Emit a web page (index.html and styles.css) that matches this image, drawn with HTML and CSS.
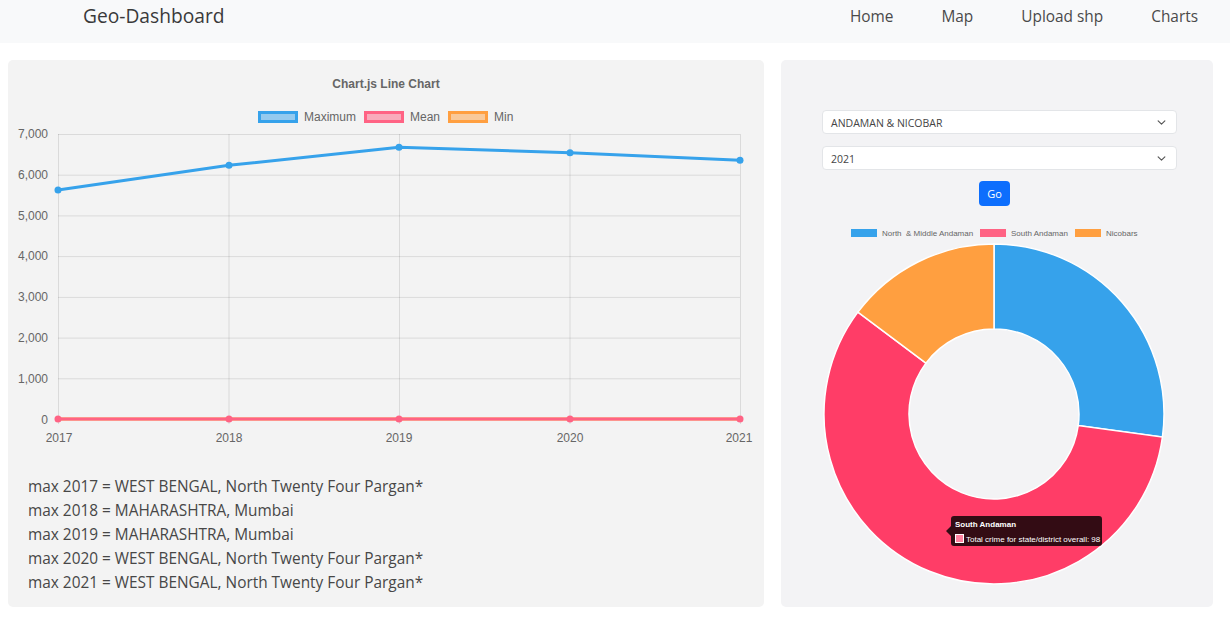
FILE: index.html
```html
<!DOCTYPE html>
<html lang="en">
<head>
<meta charset="utf-8">
<title>Geo-Dashboard</title>
<link rel="stylesheet" href="styles.css">
</head>
<body>
<nav class="navbar">
  <a class="brand" href="#">Geo-Dashboard</a>
  <ul class="nav-links">
    <li><a href="#">Home</a></li>
    <li><a href="#">Map</a></li>
    <li><a href="#">Upload shp</a></li>
    <li><a href="#">Charts</a></li>
  </ul>
</nav>

<main class="content">
  <section class="card card-line">
    <svg class="line-chart" width="756" height="400" viewBox="0 0 756 400">
      <text class="chart-title" x="378" y="28" text-anchor="middle">Chart.js Line Chart</text>
      <!-- legend -->
      <rect x="251.5" y="52.5" width="37" height="9" fill="rgba(54,162,235,0.5)" stroke="rgb(54,162,235)" stroke-width="3"/>
      <text class="lg" x="296" y="61">Maximum</text>
      <rect x="357.5" y="52.5" width="37" height="9" fill="rgba(255,99,132,0.5)" stroke="rgb(255,99,132)" stroke-width="3"/>
      <text class="lg" x="402" y="61">Mean</text>
      <rect x="441.5" y="52.5" width="37" height="9" fill="rgba(255,159,64,0.5)" stroke="rgb(255,159,64)" stroke-width="3"/>
      <text class="lg" x="486" y="61">Min</text>
      <!-- grid -->
      <g stroke="rgba(0,0,0,0.1)" stroke-width="1">
        <line x1="50" y1="74.5" x2="732" y2="74.5"/>
        <line x1="50" y1="115.2" x2="732" y2="115.2"/>
        <line x1="50" y1="155.9" x2="732" y2="155.9"/>
        <line x1="50" y1="196.6" x2="732" y2="196.6"/>
        <line x1="50" y1="237.4" x2="732" y2="237.4"/>
        <line x1="50" y1="278.1" x2="732" y2="278.1"/>
        <line x1="50" y1="318.8" x2="732" y2="318.8"/>
        <line x1="50" y1="359.5" x2="732" y2="359.5"/>
        <line x1="50.5" y1="74" x2="50.5" y2="364"/>
        <line x1="221" y1="74" x2="221" y2="364"/>
        <line x1="391.5" y1="74" x2="391.5" y2="364"/>
        <line x1="562" y1="74" x2="562" y2="364"/>
        <line x1="732.5" y1="74" x2="732.5" y2="364"/>
      </g>
      <g class="tick" text-anchor="end">
        <text x="40" y="78">7,000</text>
        <text x="40" y="119">6,000</text>
        <text x="40" y="160">5,000</text>
        <text x="40" y="200">4,000</text>
        <text x="40" y="241">3,000</text>
        <text x="40" y="282">2,000</text>
        <text x="40" y="323">1,000</text>
        <text x="40" y="364">0</text>
      </g>
      <g class="tick" text-anchor="middle">
        <text x="51" y="382">2017</text>
        <text x="221" y="382">2018</text>
        <text x="391" y="382">2019</text>
        <text x="562" y="382">2020</text>
        <text x="731" y="382">2021</text>
      </g>
      <!-- min line (hidden under mean) -->
      <polyline points="50,359 221,359 391,359 562,359 732,359" fill="none" stroke="rgb(255,159,64)" stroke-width="3"/>
      <!-- mean -->
      <polyline points="50,359 221,359 391,359 562,359 732,359" fill="none" stroke="rgb(255,99,132)" stroke-width="3"/>
      <g fill="rgb(255,99,132)">
        <circle cx="50" cy="359" r="3.5"/><circle cx="221" cy="359" r="3.5"/><circle cx="391" cy="359" r="3.5"/><circle cx="562" cy="359" r="3.5"/><circle cx="732" cy="359" r="3.5"/>
      </g>
      <!-- maximum -->
      <polyline points="50,130 221,105.3 391,87.3 562,92.7 732,100.3" fill="none" stroke="rgb(54,162,235)" stroke-width="3"/>
      <g fill="rgb(54,162,235)">
        <circle cx="50" cy="130" r="3.5"/><circle cx="221" cy="105.3" r="3.5"/><circle cx="391" cy="87.3" r="3.5"/><circle cx="562" cy="92.7" r="3.5"/><circle cx="732" cy="100.3" r="3.5"/>
      </g>
    </svg>
    <ul class="max-list">
      <li>max 2017 = WEST BENGAL, North Twenty Four Pargan*</li>
      <li>max 2018 = MAHARASHTRA, Mumbai</li>
      <li>max 2019 = MAHARASHTRA, Mumbai</li>
      <li>max 2020 = WEST BENGAL, North Twenty Four Pargan*</li>
      <li>max 2021 = WEST BENGAL, North Twenty Four Pargan*</li>
    </ul>
  </section>

  <section class="card card-pie">
    <div class="form">
      <div class="select">
        <span>ANDAMAN &amp; NICOBAR</span>
        <svg class="chev" width="9" height="9" viewBox="0 0 16 16"><path d="M2 5l6 6 6-6" fill="none" stroke="#555" stroke-width="2" stroke-linecap="round" stroke-linejoin="round"/></svg>
      </div>
      <div class="select">
        <span>2021</span>
        <svg class="chev" width="9" height="9" viewBox="0 0 16 16"><path d="M2 5l6 6 6-6" fill="none" stroke="#555" stroke-width="2" stroke-linecap="round" stroke-linejoin="round"/></svg>
      </div>
    </div>
    <button class="btn-go" type="button">Go</button>
    <svg class="pie-chart" width="432" height="370" viewBox="0 0 432 370">
      <rect x="70" y="9" width="26" height="8" fill="rgb(54,162,235)"/>
      <text class="plg" x="101" y="16" xml:space="preserve">North  &amp; Middle Andaman</text>
      <rect x="199" y="9" width="26" height="8" fill="rgb(255,99,132)"/>
      <text class="plg" x="230" y="16">South Andaman</text>
      <rect x="294" y="9" width="26" height="8" fill="rgb(255,159,64)"/>
      <text class="plg" x="325" y="16">Nicobars</text>
      <g stroke="#fff" stroke-width="1.5">
        <path fill="rgb(54,162,235)" d="M213,24 A170,170 0 0 1 381.43,217.07 L297.21,205.53 A85,85 0 0 0 213,109 Z"/>
        <path fill="rgb(255,61,103)" d="M381.43,217.07 A170,170 0 1 1 76.88,92.17 L144.94,143.08 A85,85 0 1 0 297.21,205.53 Z"/>
        <path fill="rgb(255,159,64)" d="M76.88,92.17 A170,170 0 0 1 213,24 L213,109 A85,85 0 0 0 144.94,143.08 Z"/>
      </g>
      <!-- tooltip -->
      <path d="M173,296 H318 Q321,296 321,299 V323 Q321,326 318,326 H173 Q170,326 170,323 V316 L165,311 L170,306 V299 Q170,296 173,296 Z" fill="rgba(0,0,0,0.8)"/>
      <text class="tt-title" x="174" y="307">South Andaman</text>
      <rect x="174.5" y="314.5" width="8" height="8" fill="rgb(255,130,160)" stroke="#fff" stroke-width="1"/>
      <text class="tt-body" x="185" y="321.5">Total crime for state/district overall: 98</text>
    </svg>
  </section>
</main>
</body>
</html>
```

FILE: styles.css
```css
* { box-sizing: border-box; }

body {
  margin: 0;
  background: #fff;
  font-family: "Open Sans", "Noto Sans", sans-serif;
  color: #212529;
}

.navbar {
  height: 43px;
  background: #f8f9fa;
  display: flex;
  align-items: flex-start;
  justify-content: space-between;
  padding: 1px 8px 0 83px;
}

.brand {
  font-size: 19.2px;
  line-height: 30px;
  color: #3a3a3a;
  text-decoration: none;
}

.nav-links {
  list-style: none;
  margin: 0;
  padding: 4px 0 0;
  display: flex;
}

.nav-links a {
  display: block;
  padding: 0 24px;
  font-size: 15.4px;
  line-height: 24px;
  color: #4a4a4a;
  text-decoration: none;
}

.content {
  display: grid;
  grid-template-columns: 756px 432px;
  gap: 17px;
  padding: 17px 17px 0 8px;
}

.card {
  height: 547px;
  border-radius: 5px;
}

.card-line { background: #f3f3f3; }
.card-pie { background: #f3f3f5; padding-top: 50px; }

.line-chart, .pie-chart { display: block; }

.line-chart text, .pie-chart text {
  font-family: "Liberation Sans", Arial, sans-serif;
}

.chart-title { font-size: 12px; font-weight: bold; fill: #666; }
.lg { font-size: 12px; fill: #666; }
.tick text { font-size: 12px; fill: #666; }

.max-list {
  list-style: none;
  margin: 0;
  padding: 15px 0 0 20px;
}

.max-list li {
  font-size: 15.4px;
  line-height: 24px;
  color: #474747;
}

.form {
  margin-left: 41px;
  width: 355px;
  display: flex;
  flex-direction: column;
  gap: 12px;
}

.select {
  height: 24px;
  background: #fff;
  border: 1px solid #e3e5e8;
  border-radius: 4px;
  display: flex;
  align-items: center;
  justify-content: space-between;
  padding: 1px 10px 0 8px;
  font-size: 10.5px;
  color: #444;
}

.btn-go {
  display: block;
  margin: 11px 0 0 198px;
  width: 31px;
  height: 25px;
  padding: 0;
  border: none;
  border-radius: 4px;
  background: #0d6efd;
  color: #fff;
  font-family: "Open Sans", sans-serif;
  font-size: 11px;
}

.pie-chart { margin-top: 14px; }

.plg { font-size: 8px; fill: #666; }
.tt-title { font-size: 8px; font-weight: bold; fill: #fff; }
.tt-body { font-size: 8px; fill: #fff; }
```
